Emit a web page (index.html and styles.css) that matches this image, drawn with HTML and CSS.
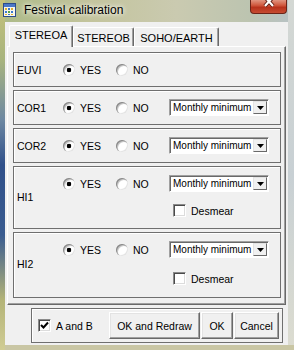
FILE: index.html
```html
<!DOCTYPE html>
<html lang="en">
<head>
  <meta charset="UTF-8" />
  <meta name="viewport" content="width=device-width, initial-scale=1.0"/>
  <title>Festival calibration</title>
  <link rel="stylesheet" href="styles.css">
</head>
<body>
  <div class="window">
    <div class="titlebar">
      <svg class="app-icon" width="13" height="14" viewBox="0 0 13 14">
        <rect x="0.5" y="0.5" width="12" height="13" fill="#f6f6ee" stroke="#2c4c8c"/>
        <rect x="1" y="1" width="11" height="3" fill="#4a78c8"/>
        <rect x="2" y="5" width="2" height="2" fill="#e0b030"/>
        <rect x="5" y="5" width="2" height="2" fill="#3c7ad0"/>
        <rect x="8" y="5" width="2" height="2" fill="#e0b030"/>
        <rect x="2" y="8" width="2" height="2" fill="#3c7ad0"/>
        <rect x="5" y="8" width="2" height="2" fill="#58a040"/>
        <rect x="8" y="8" width="2" height="2" fill="#3c7ad0"/>
        <rect x="2" y="11" width="2" height="1" fill="#e0b030"/>
        <rect x="5" y="11" width="2" height="1" fill="#3c7ad0"/>
        <rect x="8" y="11" width="2" height="1" fill="#e0b030"/>
      </svg>
      <span class="title">Festival calibration</span>
      <div class="close-btn">
        <svg width="12" height="11" viewBox="0 0 12 11">
          <path d="M2 0 L10 9 M10 0 L2 9" stroke="#5a1a10" stroke-width="4"/>
          <path d="M2 0 L10 9 M10 0 L2 9" stroke="#fff" stroke-width="2.2"/>
        </svg>
      </div>
    </div>

    <div class="client">
      <div class="tabs">
        <div class="tab active" style="width: 64px">STEREOA</div>
        <div class="tab" style="width: 61px">STEREOB</div>
        <div class="tab" style="width: 85px">SOHO/EARTH</div>
      </div>

      <div class="tab-pane">
        <div class="group">
          <div class="inst">EUVI</div>
          <label class="opt"><span class="radio checked"></span>YES</label>
          <label class="opt"><span class="radio"></span>NO</label>
        </div>

        <div class="group">
          <div class="inst">COR1</div>
          <label class="opt"><span class="radio checked"></span>YES</label>
          <label class="opt"><span class="radio"></span>NO</label>
          <div class="select">
            <span class="select-text">Monthly minimum</span>
            <span class="select-btn"><svg width="7" height="4" viewBox="0 0 7 4"><polygon points="0,0 7,0 3.5,4" fill="#000"/></svg></span>
          </div>
        </div>

        <div class="group">
          <div class="inst">COR2</div>
          <label class="opt"><span class="radio checked"></span>YES</label>
          <label class="opt"><span class="radio"></span>NO</label>
          <div class="select">
            <span class="select-text">Monthly minimum</span>
            <span class="select-btn"><svg width="7" height="4" viewBox="0 0 7 4"><polygon points="0,0 7,0 3.5,4" fill="#000"/></svg></span>
          </div>
        </div>

        <div class="group tall">
          <div class="inst">HI1</div>
          <label class="opt"><span class="radio checked"></span>YES</label>
          <label class="opt"><span class="radio"></span>NO</label>
          <div class="select">
            <span class="select-text">Monthly minimum</span>
            <span class="select-btn"><svg width="7" height="4" viewBox="0 0 7 4"><polygon points="0,0 7,0 3.5,4" fill="#000"/></svg></span>
          </div>
          <label class="opt desmear"><span class="checkbox"></span>Desmear</label>
        </div>

        <div class="group tall hi2">
          <div class="inst">HI2</div>
          <label class="opt"><span class="radio checked"></span>YES</label>
          <label class="opt"><span class="radio"></span>NO</label>
          <div class="select">
            <span class="select-text">Monthly minimum</span>
            <span class="select-btn"><svg width="7" height="4" viewBox="0 0 7 4"><polygon points="0,0 7,0 3.5,4" fill="#000"/></svg></span>
          </div>
          <label class="opt desmear"><span class="checkbox"></span>Desmear</label>
        </div>
      </div>

      <div class="footer">
        <label class="opt both">
          <span class="checkbox"><svg width="9" height="9" viewBox="0 0 9 9"><path d="M1 4 L3.5 6.5 L8 1.5" fill="none" stroke="#000" stroke-width="2"/></svg></span>
          A and B
        </label>
        <div class="buttons">
          <button class="btn btn-redraw">OK and Redraw</button>
          <button class="btn btn-ok">OK</button>
          <button class="btn btn-cancel">Cancel</button>
        </div>
      </div>
    </div>
  </div>
</body>
</html>
```

FILE: styles.css
```css
* {
  box-sizing: border-box;
}

body {
  margin: 0;
  font-family: "Liberation Sans", Arial, sans-serif;
  font-size: 10.5px;
  color: #000;
  overflow: hidden;
}

/* window frame (blurred glass) */
.window {
  width: 294px;
  height: 350px;
  padding: 0 6px 5px 5px;
  display: flex;
  flex-direction: column;
  background:
    linear-gradient(180deg, #c6c27a 0, #a8b47e 60px, #6d88a2 120px, #30508a 165px, #3a5c90 235px, #b4b478 300px, #d0cc94 350px) 0 0 / 5px 100% no-repeat,
    linear-gradient(180deg, #c9c6a4 0, #c9c6a4 100%) 0 345px / 100% 5px no-repeat,
    linear-gradient(180deg, #d4d8d4 0, #c8d0d4 50%, #dcdcd0 100%) 288px 0 / 6px 100% no-repeat,
    linear-gradient(90deg, #acba88 0, #c3c49c 30%, #cacab0 60%, #bcc4b0 85%, #b8c2c6 100%);
}

.titlebar {
  height: 22px;
  margin: 0 -6px 0 -5px;
  display: flex;
  align-items: flex-start;
}

.app-icon {
  flex-shrink: 0;
  margin: 3px 0 0 3px;
}

.title {
  margin: 3px 0 0 8px;
  font-size: 12px;
  line-height: 15px;
  text-shadow: 0 0 4px #fff, 0 0 7px rgba(255, 255, 255, 0.8);
}

.close-btn {
  width: 37px;
  height: 15px;
  margin: -1px 7px 0 auto;
  border: 1px solid #6b2418;
  border-top: none;
  border-radius: 0 0 4px 4px;
  background: linear-gradient(#e4a08c, #d0583e 45%, #b8321c 60%, #c64c32);
  display: flex;
  justify-content: center;
  align-items: flex-start;
}

.close-btn svg {
  margin-top: -2px;
}

/* client area */
.client {
  flex: 1;
  background: #f0f0f0;
  padding: 3px 2px 2px;
  display: flex;
  flex-direction: column;
}

.tabs {
  display: flex;
  align-items: flex-end;
  height: 21px;
  margin-left: 2px;
}

.tab {
  height: 19px;
  padding-top: 4px;
  font-size: 11px;
  line-height: 12px;
  text-align: center;
  border-top: 1px solid #fff;
  border-left: 1px solid #fff;
  border-right: 1px solid #696969;
  border-radius: 2px 2px 0 0;
  box-shadow: inset -1px 0 0 #a0a0a0;
}

.tab.active {
  height: 22px;
  padding-top: 3px;
  margin-bottom: -1px;
  position: relative;
  z-index: 1;
  background: #f0f0f0;
}

.tab-pane {
  height: 259px;
  padding: 5px 4px 0 5px;
  border: 1px solid;
  border-color: #fff #696969 #696969 #fff;
  box-shadow: inset -1px -1px 0 #a0a0a0;
  display: flex;
  flex-direction: column;
  gap: 3px;
}

.group {
  height: 35px;
  display: grid;
  grid-template-columns: 49px 53px 53px 100px;
  grid-template-rows: 17px;
  align-content: center;
  border: 1px solid #6f6f6f;
  box-shadow: inset 1px 1px 0 #fff;
}

.group.tall {
  height: 63px;
  grid-template-rows: 17px 17px;
  row-gap: 10px;
  align-content: start;
  padding-top: 8px;
}

.group.hi2 {
  height: 66px;
  row-gap: 12px;
}

.inst {
  grid-row: 1 / -1;
  align-self: center;
  padding-left: 3px;
}

.opt {
  display: flex;
  align-items: center;
  gap: 5px;
}

.radio {
  width: 12px;
  height: 12px;
  border-radius: 50%;
  background: #fff;
  box-shadow: inset 1px 1px 0 #8a8a8a, inset 2px 2px 0 #c8c8c8, inset -1px -1px 0 #e4e4e4;
}

.radio.checked {
  background: radial-gradient(circle, #000 0, #000 2px, #fff 2.6px);
}

.checkbox {
  width: 13px;
  height: 13px;
  flex-shrink: 0;
  background: #fff;
  border: 1px solid;
  border-color: #8a8a8a #fff #fff #8a8a8a;
  box-shadow: inset 1px 1px 0 #4a4a4a, inset -1px -1px 0 #dcdcdc;
  display: flex;
  align-items: center;
  justify-content: center;
}

.select {
  grid-column: 4;
  grid-row: 1;
  height: 17px;
  padding: 0 1px 0 3px;
  background: #fff;
  border: 1px solid;
  border-color: #a0a0a0 #fff #fff #a0a0a0;
  box-shadow: inset 1px 1px 0 #696969;
  display: flex;
  align-items: center;
}

.select-text {
  flex: 1;
  min-width: 0;
  overflow: hidden;
  white-space: nowrap;
  font-size: 10px;
}

.select-btn {
  flex-shrink: 0;
  width: 14px;
  height: 13px;
  background: #f0f0f0;
  border: 1px solid;
  border-color: #e3e3e3 #696969 #696969 #e3e3e3;
  display: flex;
  align-items: center;
  justify-content: center;
}

.desmear {
  grid-column: 4;
  grid-row: 2;
  padding-left: 4px;
}

/* bottom buttons */
.footer {
  height: 35px;
  margin: 3px 3px 0 24px;
  padding: 0 3px 0 6px;
  border: 1px solid #6f6f6f;
  box-shadow: inset 1px 1px 0 #fff;
  display: flex;
  align-items: center;
}

.both {
  gap: 5px;
}

.buttons {
  margin-left: auto;
  display: flex;
  gap: 1px;
}

.btn {
  height: 27px;
  padding: 0;
  font-family: inherit;
  font-size: 10.5px;
  color: #000;
  background: #f0f0f0;
  border: 1px solid;
  border-color: #fff #696969 #696969 #fff;
  box-shadow: inset -1px -1px 0 #a0a0a0, inset 1px 1px 0 #e3e3e3;
}

.btn-redraw {
  width: 91px;
}

.btn-ok {
  width: 32px;
}

.btn-cancel {
  width: 45px;
}
```
